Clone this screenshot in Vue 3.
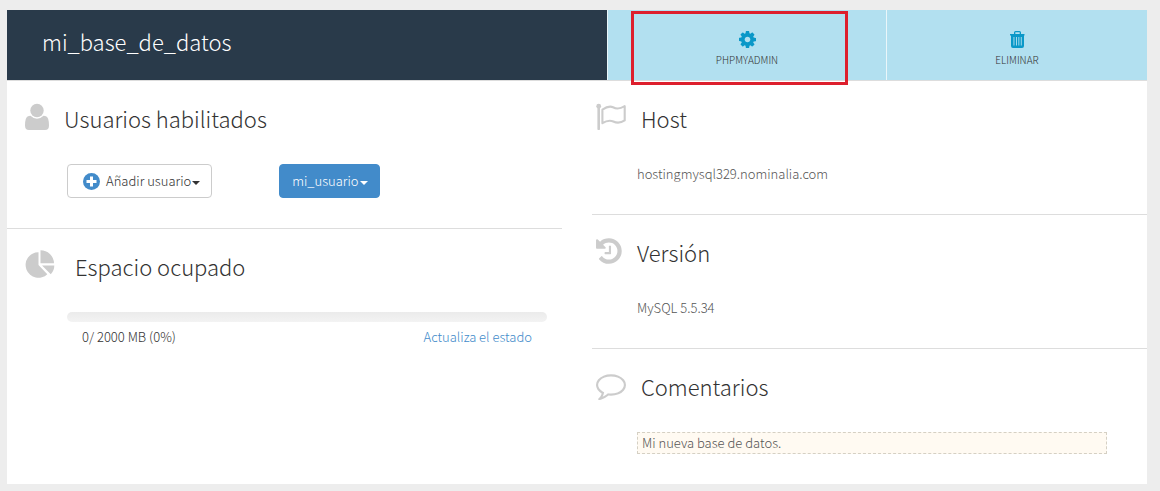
<script setup>
import { ref } from 'vue'

const database = {
  name: 'mi_base_de_datos',
  host: 'hostingmysql329.nominalia.com',
  version: 'MySQL 5.5.34',
  used: 0,
  quota: 2000,
}
const usedPercent = Math.round((database.used / database.quota) * 100)
const comment = ref('Mi nueva base de datos.')
</script>

<template>
  <main class="card">
    <header class="top">
      <h1 class="name">{{ database.name }}</h1>
      <button type="button" class="action">
        <svg class="action-icon" viewBox="128 128 1536 1536" aria-hidden="true">
          <path d="M1152 896q0-106-75-181t-181-75-181 75-75 181 75 181 181 75 181-75 75-181zm512-109v222q0 12-8 23t-20 13l-185 28q-19 54-39 91 35 50 107 138 10 12 10 25t-9 23q-27 37-99 108t-94 71q-12 0-26-9l-138-108q-44 23-91 38-16 136-29 186-7 28-36 28h-222q-14 0-24.5-8.500t-11.500-21.500l-28-184q-49-16-90-37l-141 107q-10 9-25 9-14 0-25-11-126-114-165-168-7-10-7-23 0-12 8-23 15-21 51-66.500t54-70.500q-27-50-41-99l-183-27q-13-2-21-12.500t-8-23.500v-222q0-12 8-23t19-13l186-28q14-46 39-92-40-57-107-138-10-12-10-24 0-10 9-23 26-36 98.500-107.500t94.500-71.500q13 0 26 10l138 107q44-23 91-38 16-136 29-186 7-28 36-28h222q14 0 24.500 8.500t11.500 21.500l28 184q49 16 90 37l142-107q9-9 24-9 13 0 25 10 129 119 165 170 7 8 7 22 0 12-8 23-15 21-51 66.500t-54 70.500q26 50 41 98l183 28q13 2 21 12.500t8 23.500z" />
        </svg>
        <span>PHPMYADMIN</span>
        <span class="highlight" aria-hidden="true"></span>
      </button>
      <button type="button" class="action">
        <svg class="action-icon" viewBox="0 0 17 17" aria-hidden="true">
          <path fill-rule="evenodd" d="M5 3V1.500Q5 0 6.500 0h4Q12 0 12 1.500V3h3.500v1.500H15V15q0 2-2 2H4q-2 0-2-2V4.500H1V3zM6.300 3h4.400V1.300H6.300zM4.500 6v8.500h.9V6zM7 6v8.500h.9V6zM9.400 6v8.500h.9V6zM11.800 6v8.500h.9V6z" />
        </svg>
        <span>ELIMINAR</span>
      </button>
    </header>

    <div class="columns">
      <div class="column">
        <section class="panel">
          <h2 class="heading">
            <svg class="icon person" viewBox="0 0 24 30" aria-hidden="true">
              <circle cx="12" cy="8.500" r="6.700" />
              <path d="M5.500 13.800Q8.300 16.700 12 16.700T18.500 13.800Q22 13.800 23.200 17 24 19.500 24 23.500 24 28 20 28H4Q0 28 0 23.500 0 19.500.8 17 2 13.800 5.500 13.800z" />
            </svg>
            Usuarios habilitados
          </h2>
          <div class="buttons">
            <button type="button" class="btn btn-default">
              <svg class="plus" viewBox="0 0 17 17" aria-hidden="true">
                <circle cx="8.500" cy="8.500" r="8.500" fill="#428bca" />
                <path d="M8.500 3.500v10M3.500 8.500h10" stroke="#fff" stroke-width="3" />
              </svg>
              <span>Añadir usuario</span>
              <span class="caret"></span>
            </button>
            <button type="button" class="btn btn-primary">
              <span>mi_usuario</span>
              <span class="caret"></span>
            </button>
          </div>
        </section>

        <section class="panel">
          <h2 class="heading">
            <svg class="icon pie" viewBox="0 0 30 30" aria-hidden="true">
              <path d="M13.500 3.200V16L22.300 25.200A12.800 12.800 0 1 1 13.500 3.200zM15.500 1.200A13.500 13.500 0 0 1 29 14.200H15.500zM17 16.500H29.300Q29.300 21.500 25.800 25.300z" />
            </svg>
            Espacio ocupado
          </h2>
          <div class="usage">
            <div class="bar" role="progressbar" aria-label="Espacio ocupado" :aria-valuenow="usedPercent">
              <div class="bar-fill" :style="{ width: usedPercent + '%' }"></div>
            </div>
            <div class="usage-row">
              <span>{{ database.used }}/ {{ database.quota }} MB ({{ usedPercent }}%)</span>
              <a href="#">Actualiza el estado</a>
            </div>
          </div>
        </section>
      </div>

      <div class="column">
        <section class="panel">
          <h2 class="heading">
            <svg class="icon flag" viewBox="0 0 31 30" aria-hidden="true">
              <circle cx="2.700" cy="4.200" r="2.400" />
              <path d="M1.400 4h2.600v23.200q0 .8-.8.800h-1q-.8 0-.8-.8z" />
              <path d="M6.400 7.600C9.700 5.400 13.500 3.600 17 5.300 20.300 7 23 7.500 28.700 4.200V18.400C24 21.500 21 21.200 17.300 19.500 13.500 17.700 10.200 18.800 6.400 21.200z" fill="none" stroke="#ccc" stroke-width="2.100" stroke-linejoin="round" />
            </svg>
            Host
          </h2>
          <p class="value">{{ database.host }}</p>
        </section>

        <section class="panel">
          <h2 class="heading">
            <svg class="icon clock" viewBox="128 0 1550 1792" aria-hidden="true">
              <path d="M1664 896q0 156-61 298t-164 245-245 164-298 61q-172 0-327-72.500t-264-204.500q-7-10-6.500-22.500t8.500-20.500l137-138q10-9 25-9 16 2 23 12 73 95 179 147t225 52q104 0 198.500-40.500t163.500-109.500 109.500-163.500 40.500-198.500-40.500-198.500-109.500-163.500-163.500-109.500-198.500-40.500q-98 0-188 35.500t-160 101.500l137 138q31 30 14 69-17 40-59 40h-448q-26 0-45-19t-19-45v-448q0-42 40-59 39-17 69 14l130 129q107-101 244.500-156.500t284.500-55.500q156 0 298 61t245 164 164 245 61 298zm-640-288v448q0 14-9 23t-23 9h-320q-14 0-23-9t-9-23v-64q0-14 9-23t23-9h224v-352q0-14 9-23t23-9h64q14 0 23 9t9 23z" />
            </svg>
            Versión
          </h2>
          <p class="value">{{ database.version }}</p>
        </section>

        <section class="panel">
          <h2 class="heading">
            <svg class="icon bubble" viewBox="0 0 1792 1792" aria-hidden="true">
              <path d="M896 384q-204 0-381.500 69.500t-282 187.500-104.500 255q0 112 71.500 213.500t201.500 175.500l87 50-27 96q-24 91-70 172 152-63 275-171l43-38 57 6q69 8 130 8 204 0 381.500-69.500t282-187.500 104.500-255-104.500-255-282-187.500-381.500-69.500zm896 512q0 174-120 321.500t-326 233-450 85.500q-70 0-145-8-198 175-460 242-49 14-114 22h-5q-15 0-27-10.500t-16-27.500v-1q-3-4-.5-12t2-10 4.500-9.500l6-9 7-8.500 8-9q7-8 31-34.500t34.500-38 31-39.500 32.500-51 27-59 26-76q-157-89-247.500-220t-90.500-281q0-174 120-321.500t326-233 450-85.500 450 85.500 326 233 120 321.500z" />
            </svg>
            <label for="comment">Comentarios</label>
          </h2>
          <input id="comment" v-model="comment" type="text" class="comment" />
        </section>
      </div>
    </div>
  </main>
</template>

<style>
body {
  background: #ededed;
}
</style>

<style scoped>
.card {
  margin: 10px 13px 7px 7px;
  background: #fff;
  color: #333;
  font-family: "Noto Sans CJK SC Light", "Noto Sans CJK SC", "Noto Sans", sans-serif;
  font-weight: 300;
  font-size: 13px;
  line-height: 20px;
}

.top {
  display: grid;
  grid-template-columns: 600fr 279fr 261fr;
  border-bottom: 1px solid #ddd;
}

.name {
  margin: 0;
  padding: 15px 35px 23px;
  background: #293a4a;
  color: #fff;
  font-size: 22px;
  font-weight: inherit;
  line-height: 32px;
}

.action {
  position: relative;
  display: flex;
  flex-direction: column;
  align-items: center;
  gap: 5px;
  padding: 21px 0 0;
  border: 0;
  border-left: 1px solid #eaf6fa;
  background: #b2e0f0;
  color: #333;
  font: inherit;
  font-size: 10px;
  line-height: 14px;
}

.action-icon {
  width: 17px;
  height: 17px;
  fill: #0a98c8;
}

.highlight {
  position: absolute;
  inset: 1px 38px -5px 23px;
  border: 3px solid #dd1f2d;
}

.columns {
  display: grid;
  grid-template-columns: 1fr 1fr;
  gap: 30px;
}

.panel {
  padding: 20px 0 30px;
}

.panel + .panel {
  border-top: 1px solid #ddd;
}

.heading {
  display: flex;
  margin: 0 0 29px;
  font-size: 22px;
  font-weight: inherit;
  line-height: 34px;
}

.icon {
  flex: none;
  height: 30px;
  fill: #ccc;
}

.person {
  width: 24px;
  margin: 1px 15px 0 18px;
}

.pie {
  width: 30px;
  margin: 0 20px 0 18px;
}

.flag {
  width: 31px;
  margin: 1px 14px 0 4px;
}

.clock {
  width: 26px;
  margin: 1px 15px 0 4px;
}

.bubble {
  width: 30px;
  margin: 1px 15px 0 4px;
}

.buttons {
  display: flex;
  gap: 67px;
  padding-left: 60px;
}

.btn {
  display: flex;
  align-items: center;
  height: 34px;
  padding: 0 11px 0 12px;
  border: 1px solid #ccc;
  border-radius: 4px;
  background: #fff;
  color: #333;
  font: inherit;
}

.btn-primary {
  border-color: #428bca;
  background: #428bca;
  color: #fff;
}

.plus {
  width: 17px;
  height: 17px;
  margin: 0 6px 0 3px;
}

.caret {
  margin: 4px 0 0 1px;
  border: 4px solid transparent;
  border-top-color: currentColor;
  border-bottom: 0;
}

.usage {
  padding: 0 15px 0 60px;
}

.bar {
  height: 10px;
  overflow: hidden;
  border-radius: 5px;
  background: linear-gradient(#ebebeb, #f3f3f3);
}

.bar-fill {
  height: 100%;
  background: #428bca;
}

.usage-row {
  display: flex;
  justify-content: space-between;
  padding: 5px 15px 0;
}

.usage-row a {
  color: #428bca;
  text-decoration: none;
}

.value {
  margin: 0 45px;
  color: #555;
}

.comment {
  display: block;
  box-sizing: border-box;
  width: calc(100% - 85px);
  height: 22px;
  margin-left: 45px;
  padding: 0 4px 2px;
  border: 1px dashed #d5d0c4;
  background: #fffaf2;
  color: #555;
  font: inherit;
}
</style>
